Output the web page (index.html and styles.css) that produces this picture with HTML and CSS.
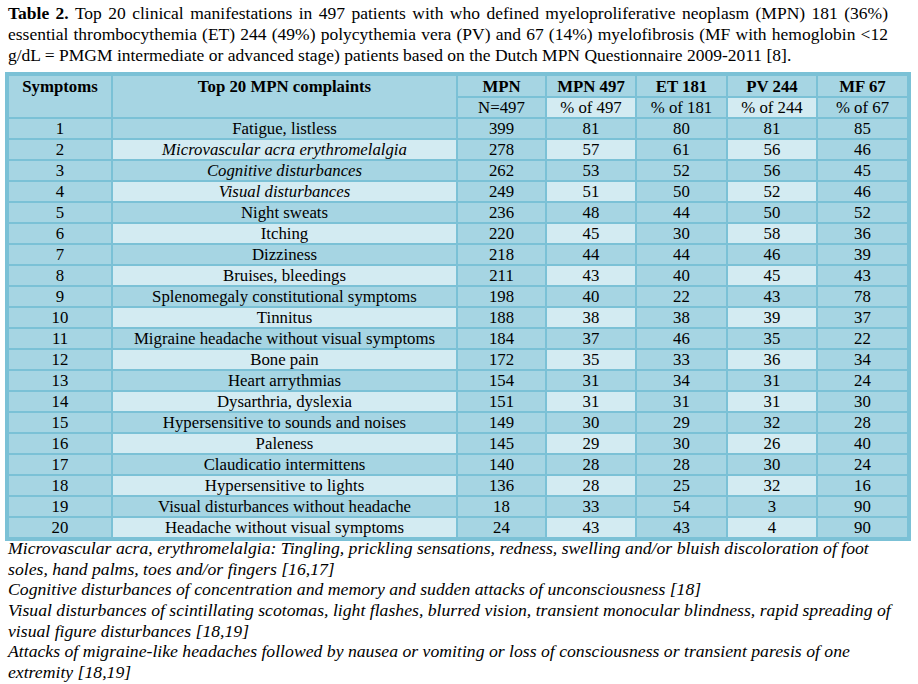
FILE: index.html
```html
<!DOCTYPE html>
<html>
<head>
<meta charset="utf-8">
<link rel="stylesheet" href="styles.css">
</head>
<body>
<div class="page">
<p class="caption"><b>Table 2.</b> Top 20 clinical manifestations in 497 patients with who defined myeloproliferative neoplasm (MPN) 181 (36%) essential thrombocythemia (ET) 244 (49%) polycythemia vera (PV) and 67 (14%) myelofibrosis (MF with hemoglobin &lt;12 g/dL = PMGM intermediate or advanced stage) patients based on the Dutch MPN Questionnaire 2009-2011 [8].</p>
<table class="data">
<colgroup>
<col class="c1"><col class="c2"><col class="c3"><col class="c4"><col class="c5"><col class="c6"><col class="c7">
</colgroup>
<thead>
<tr class="h1">
<th rowspan="2">Symptoms</th>
<th rowspan="2">Top 20 MPN complaints</th>
<th>MPN</th><th>MPN 497</th><th>ET 181</th><th>PV 244</th><th>MF 67</th>
</tr>
<tr class="h2">
<td>N=497</td><td>% of 497</td><td>% of 181</td><td>% of 244</td><td>% of 67</td>
</tr>
</thead>
<tbody>
<tr><td>1</td><td>Fatigue, listless</td><td>399</td><td>81</td><td>80</td><td>81</td><td>85</td></tr>
<tr class="alt"><td>2</td><td><i>Microvascular acra erythromelalgia</i></td><td>278</td><td>57</td><td>61</td><td>56</td><td>46</td></tr>
<tr><td>3</td><td><i>Cognitive disturbances</i></td><td>262</td><td>53</td><td>52</td><td>56</td><td>45</td></tr>
<tr class="alt"><td>4</td><td><i>Visual disturbances</i></td><td>249</td><td>51</td><td>50</td><td>52</td><td>46</td></tr>
<tr><td>5</td><td>Night sweats</td><td>236</td><td>48</td><td>44</td><td>50</td><td>52</td></tr>
<tr class="alt"><td>6</td><td>Itching</td><td>220</td><td>45</td><td>30</td><td>58</td><td>36</td></tr>
<tr><td>7</td><td>Dizziness</td><td>218</td><td>44</td><td>44</td><td>46</td><td>39</td></tr>
<tr class="alt"><td>8</td><td>Bruises, bleedings</td><td>211</td><td>43</td><td>40</td><td>45</td><td>43</td></tr>
<tr><td>9</td><td>Splenomegaly constitutional symptoms</td><td>198</td><td>40</td><td>22</td><td>43</td><td>78</td></tr>
<tr class="alt"><td>10</td><td>Tinnitus</td><td>188</td><td>38</td><td>38</td><td>39</td><td>37</td></tr>
<tr><td>11</td><td>Migraine headache without visual symptoms</td><td>184</td><td>37</td><td>46</td><td>35</td><td>22</td></tr>
<tr class="alt"><td>12</td><td>Bone pain</td><td>172</td><td>35</td><td>33</td><td>36</td><td>34</td></tr>
<tr><td>13</td><td>Heart arrythmias</td><td>154</td><td>31</td><td>34</td><td>31</td><td>24</td></tr>
<tr class="alt"><td>14</td><td>Dysarthria, dyslexia</td><td>151</td><td>31</td><td>31</td><td>31</td><td>30</td></tr>
<tr><td>15</td><td>Hypersensitive to sounds and noises</td><td>149</td><td>30</td><td>29</td><td>32</td><td>28</td></tr>
<tr class="alt"><td>16</td><td>Paleness</td><td>145</td><td>29</td><td>30</td><td>26</td><td>40</td></tr>
<tr><td>17</td><td>Claudicatio intermittens</td><td>140</td><td>28</td><td>28</td><td>30</td><td>24</td></tr>
<tr class="alt"><td>18</td><td>Hypersensitive to lights</td><td>136</td><td>28</td><td>25</td><td>32</td><td>16</td></tr>
<tr><td>19</td><td>Visual disturbances without headache</td><td>18</td><td>33</td><td>54</td><td>3</td><td>90</td></tr>
<tr class="alt"><td>20</td><td>Headache without visual symptoms</td><td>24</td><td>43</td><td>43</td><td>4</td><td>90</td></tr>
</tbody>
</table>
<div class="notes">
<p>Microvascular acra, erythromelalgia: Tingling, prickling sensations, redness, swelling and/or bluish discoloration of foot soles, hand palms, toes and/or fingers [16,17]</p>
<p>Cognitive disturbances of concentration and memory and sudden attacks of unconsciousness [18]</p>
<p>Visual disturbances of scintillating scotomas, light flashes, blurred vision, transient monocular blindness, rapid spreading of visual figure disturbances [18,19]</p>
<p>Attacks of migraine-like headaches followed by nausea or vomiting or loss of consciousness or transient paresis of one extremity [18,19]</p>
</div>
</div>
</body>
</html>
```
FILE: styles.css
```css
html, body {
  margin: 0;
  padding: 0;
  background: #ffffff;
}
body {
  font-family: "Liberation Serif", "Times New Roman", serif;
  font-size: 16.8px;
  color: #000;
}
.page {
  padding: 3px 0 0 5px;
}
.caption {
  margin: 0 0 6px 3px;
  width: 880px;
  font-size: 17.5px;
  line-height: 21px;
  text-align: justify;
}
.data {
  table-layout: fixed;
  width: 906px;
  border: 2px solid #7bc1d6;
  border-spacing: 2px;
  background: #7bc1d6;
  font-size: 16.8px;
}
.c1 { width: 102px; }
.c2 { width: 343px; }
.c3 { width: 87px; }
.c4 { width: 88px; }
.c5 { width: 89px; }
.c6 { width: 88px; }
.c7 { width: 89px; }
.data th, .data td {
  font-family: "Liberation Serif", "Times New Roman", serif;
  background: #a6d5e3;
  padding: 0;
  height: 19px;
  line-height: 19px;
  text-align: center;
  white-space: nowrap;
}
.data th {
  font-weight: bold;
  vertical-align: top;
}
.data .h1 th {
  padding-top: 1px;
  height: 18px;
}
.data .h2 td:nth-child(2),
.data .h2 td:nth-child(4),
.data .alt td:nth-child(2),
.data .alt td:nth-child(4),
.data .alt td:nth-child(6) {
  background: #d3ebf2;
}
.notes {
  margin: -3px 0 0 3px;
  width: 897px;
  font-size: 17.7px;
  font-style: italic;
  line-height: 20.65px;
}
.notes p {
  margin: 0;
}
```
